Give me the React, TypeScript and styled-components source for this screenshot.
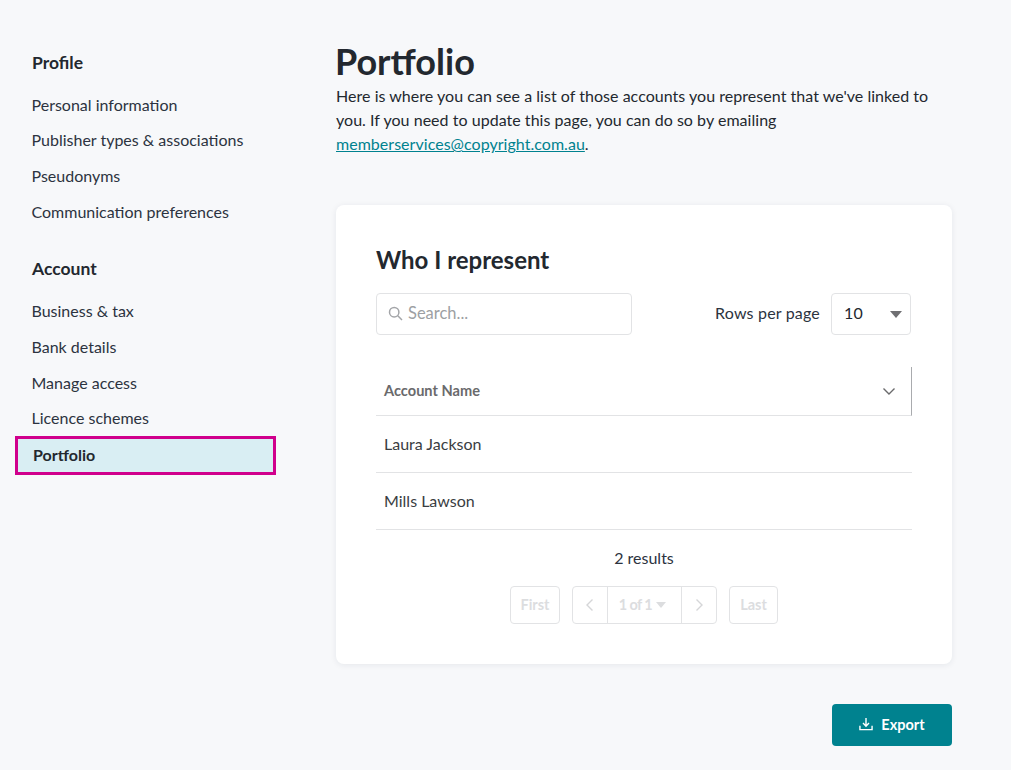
import React from "react";
import styled, { createGlobalStyle } from "styled-components";

const Global = createGlobalStyle`
  html, body { margin: 0; padding: 0; background: #f7f8fa; }
  body { font-family: "Lato", "Liberation Sans", sans-serif; color: #23282f; }
  * { box-sizing: border-box; }
`;
const Page = styled.div`
  width: 1011px; height: 770px; display: flex; overflow: hidden; background: #f7f8fa;
`;
const Sidebar = styled.nav`
  width: 336px; flex: none; padding: 51px 0 0 15px; display: flex; flex-direction: column;
`;
const GroupTitle = styled.h3`
  margin: 0; height: 24px; padding-left: 17px; font-size: 17.5px; line-height: 24px; font-weight: 700; color: #23282f;
`;
const NavList = styled.div<{ $mt: number; $mb?: number }>`
  display: flex; flex-direction: column; margin: ${p => p.$mt}px 0 ${p => p.$mb ?? 0}px;
`;
const NavItem = styled.a`
  height: 35.65px; padding: 0 0 1px 16.5px; display: flex; align-items: center; font-size: 16px; color: #2c3340;
`;
const NavActive = styled.a`
  width: 261px; height: 39px; padding: 0 0 3px 15px; display: flex; align-items: center;
  font-size: 16px; font-weight: 700; color: #23282f; background: #d9eef3; border: 3px solid #d0008c;
`;
const Main = styled.main`
  width: 616px; flex: none; padding-top: 39px; display: flex; flex-direction: column;
`;
const Title = styled.h1`
  margin: 0 0 0 -1px; font-size: 36px; line-height: 44px; font-weight: 700; color: #23282f;
`;
const Intro = styled.p`
  margin: 1px 0 0; font-size: 16px; line-height: 24px; letter-spacing: 0.035px; color: #23282f; width: 600px;
  a { color: #00828f; text-decoration: underline; }
`;
const Card = styled.section`
  margin-top: 49px; height: 459px; background: #fff; border-radius: 8px; padding: 41px 40px 0 40px;
  box-shadow: 0 1px 6px rgba(30, 40, 60, 0.08); display: flex; flex-direction: column;
`;
const CardTitle = styled.h2`
  margin: 0; font-size: 24px; line-height: 28px; font-weight: 700; color: #23282f;
`;
const Controls = styled.div`
  margin-top: 19px; padding-right: 1px; display: flex; justify-content: space-between; align-items: center;
`;
const SearchBox = styled.div`
  width: 256px; height: 42px; border: 1px solid #e2e3e5; border-radius: 4px; display: flex; align-items: center;
  gap: 5px; padding: 0 0 0 11px; font-size: 16.5px; color: #9d9fa3; background: #fff;
`;
const SearchText = styled.span`
  padding-bottom: 2px;
`;
const RowsControl = styled.div`
  display: flex; align-items: center; gap: 11px; font-size: 16px; letter-spacing: 0.18px; color: #2c3340;
`;
const RowsLabel = styled.span`
  padding-bottom: 3px;
`;
const SelectBox = styled.div`
  width: 80px; height: 42px; border: 1px solid #e2e3e5; border-radius: 4px; display: flex; align-items: center;
  justify-content: space-between; padding: 0 8px 0 12px; font-size: 16px; color: #23282f;
`;
const SelectValue = styled.span`
  padding-bottom: 3px;
`;
const TriangleDown = styled.span<{ $color: string; $w: number; $h: number }>`
  width: 0; height: 0; border-left: ${p => p.$w}px solid transparent; border-right: ${p => p.$w}px solid transparent;
  border-top: ${p => p.$h}px solid ${p => p.$color};
`;
const HeaderRow = styled.div`
  margin-top: 32px; height: 49px; display: flex; align-items: center; justify-content: space-between;
  padding: 0 15px 0 8px; border-bottom: 1px solid #e2e3e5; border-right: 1px solid #a9abae;
  font-size: 14.6px; font-weight: 700; color: #6a6a6c;
`;
const HeaderLabel = styled.span`
  padding-bottom: 1px;
`;
const Row = styled.div`
  height: 57px; display: flex; align-items: center; padding: 0 0 2px 8px; border-bottom: 1px solid #e2e3e5;
  font-size: 16px; color: #3a3d42;
`;
const Results = styled.div`
  margin-top: 18px; text-align: center; font-size: 16px; line-height: 20px; color: #2c3340;
`;
const Pager = styled.div`
  margin-top: 18px; display: flex; justify-content: center; gap: 12px;
`;
const PagerButton = styled.div<{ $w: number }>`
  width: ${p => p.$w}px; height: 38px; padding-bottom: 2px; border: 1px solid #e2e3e5; border-radius: 4px; display: flex;
  align-items: center; justify-content: center; font-size: 14.5px; font-weight: 700; color: #dcdddf;
`;
const PagerGroup = styled.div`
  width: 145px; height: 38px; border: 1px solid #e2e3e5; border-radius: 4px; display: flex; align-items: stretch;
`;
const PagerCell = styled.div<{ $w: number; $divider?: boolean }>`
  width: ${p => p.$w}px; display: flex; align-items: center; justify-content: center; gap: 4px;
  font-size: 14.5px; font-weight: 700; color: #dcdddf;
  ${p => (p.$divider ? "border-left: 1px solid #e2e3e5;" : "")}
`;
const PageSelect = styled(PagerCell)`
  padding-right: 4px;
`;
const PagerLabel = styled.span`
  padding-bottom: 2px; letter-spacing: -0.6px;
`;
const Footer = styled.div`
  margin-top: 40px; display: flex; justify-content: flex-end;
`;
const ExportButton = styled.button`
  width: 120px; height: 42px; border: 0; border-radius: 4px; background: #00828f; color: #fff; display: flex;
  align-items: center; justify-content: center; gap: 8px; padding: 0; font-family: inherit; font-size: 14.5px; font-weight: 700;
`;
const ExportLabel = styled.span`
  padding-bottom: 2px;
`;
const ExportGlyph = styled.svg`
  margin-top: -3px;
`;
const SearchGlyph = styled.svg`
  margin-top: -1px;
`;

const SearchIcon = () => (
  <SearchGlyph width="15" height="15" viewBox="0 0 15 15" fill="none" stroke="#a3a5a8" strokeWidth="1.5">
    <circle cx="6.2" cy="6.2" r="4.7" /><path d="M9.8 9.8 L14 14" />
  </SearchGlyph>
);
const Chevron = ({ d, color, size }: { d: string; color: string; size: number }) => (
  <svg width={size} height={size} viewBox="0 0 14 14" fill="none" stroke={color} strokeWidth="1.4"><path d={d} /></svg>
);
const ExportIcon = () => (
  <ExportGlyph width="14" height="14" viewBox="0 0 15 15" fill="none" stroke="#fff" strokeWidth="1.5">
    <path d="M7.5 1 V9.5 M4.3 6.5 L7.5 9.8 L10.7 6.5 M1 9.5 V13.5 H14 V9.5" />
  </ExportGlyph>
);

export default function App() {
  return (
    <Page>
      <Global />
      <Sidebar>
        <GroupTitle>Profile</GroupTitle>
        <NavList $mt={12} $mb={27}>
          <NavItem>Personal information</NavItem>
          <NavItem>Publisher types &amp; associations</NavItem>
          <NavItem>Pseudonyms</NavItem>
          <NavItem>Communication preferences</NavItem>
        </NavList>
        <GroupTitle>Account</GroupTitle>
        <NavList $mt={13}>
          <NavItem>Business &amp; tax</NavItem>
          <NavItem>Bank details</NavItem>
          <NavItem>Manage access</NavItem>
          <NavItem>Licence schemes</NavItem>
          <NavActive>Portfolio</NavActive>
        </NavList>
      </Sidebar>
      <Main>
        <Title>Portfolio</Title>
        <Intro>
          Here is where you can see a list of those accounts you represent that we've linked to you. If you need to update this page, you can do so by emailing <a>memberservices@copyright.com.au</a>.
        </Intro>
        <Card>
          <CardTitle>Who I represent</CardTitle>
          <Controls>
            <SearchBox><SearchIcon /><SearchText>Search...</SearchText></SearchBox>
            <RowsControl>
              <RowsLabel>Rows per page</RowsLabel>
              <SelectBox><SelectValue>10</SelectValue><TriangleDown $color="#6f6f72" $w={6} $h={7} /></SelectBox>
            </RowsControl>
          </Controls>
          <HeaderRow>
            <HeaderLabel>Account Name</HeaderLabel>
            <Chevron d="M1.5 4.5 L7 10 L12.5 4.5" color="#6a6a6c" size={14} />
          </HeaderRow>
          <Row>Laura Jackson</Row>
          <Row>Mills Lawson</Row>
          <Results>2 results</Results>
          <Pager>
            <PagerButton $w={50}>First</PagerButton>
            <PagerGroup>
              <PagerCell $w={34}><Chevron d="M9.5 1.5 L4 7 L9.5 12.5" color="#d5d6d8" size={14} /></PagerCell>
              <PageSelect $w={74} $divider><PagerLabel>1 of 1</PagerLabel><TriangleDown $color="#dcdddf" $w={5} $h={6} /></PageSelect>
              <PagerCell $w={35} $divider><Chevron d="M4.5 1.5 L10 7 L4.5 12.5" color="#d5d6d8" size={14} /></PagerCell>
            </PagerGroup>
            <PagerButton $w={49}>Last</PagerButton>
          </Pager>
        </Card>
        <Footer>
          <ExportButton><ExportIcon /><ExportLabel>Export</ExportLabel></ExportButton>
        </Footer>
      </Main>
    </Page>
  );
}
